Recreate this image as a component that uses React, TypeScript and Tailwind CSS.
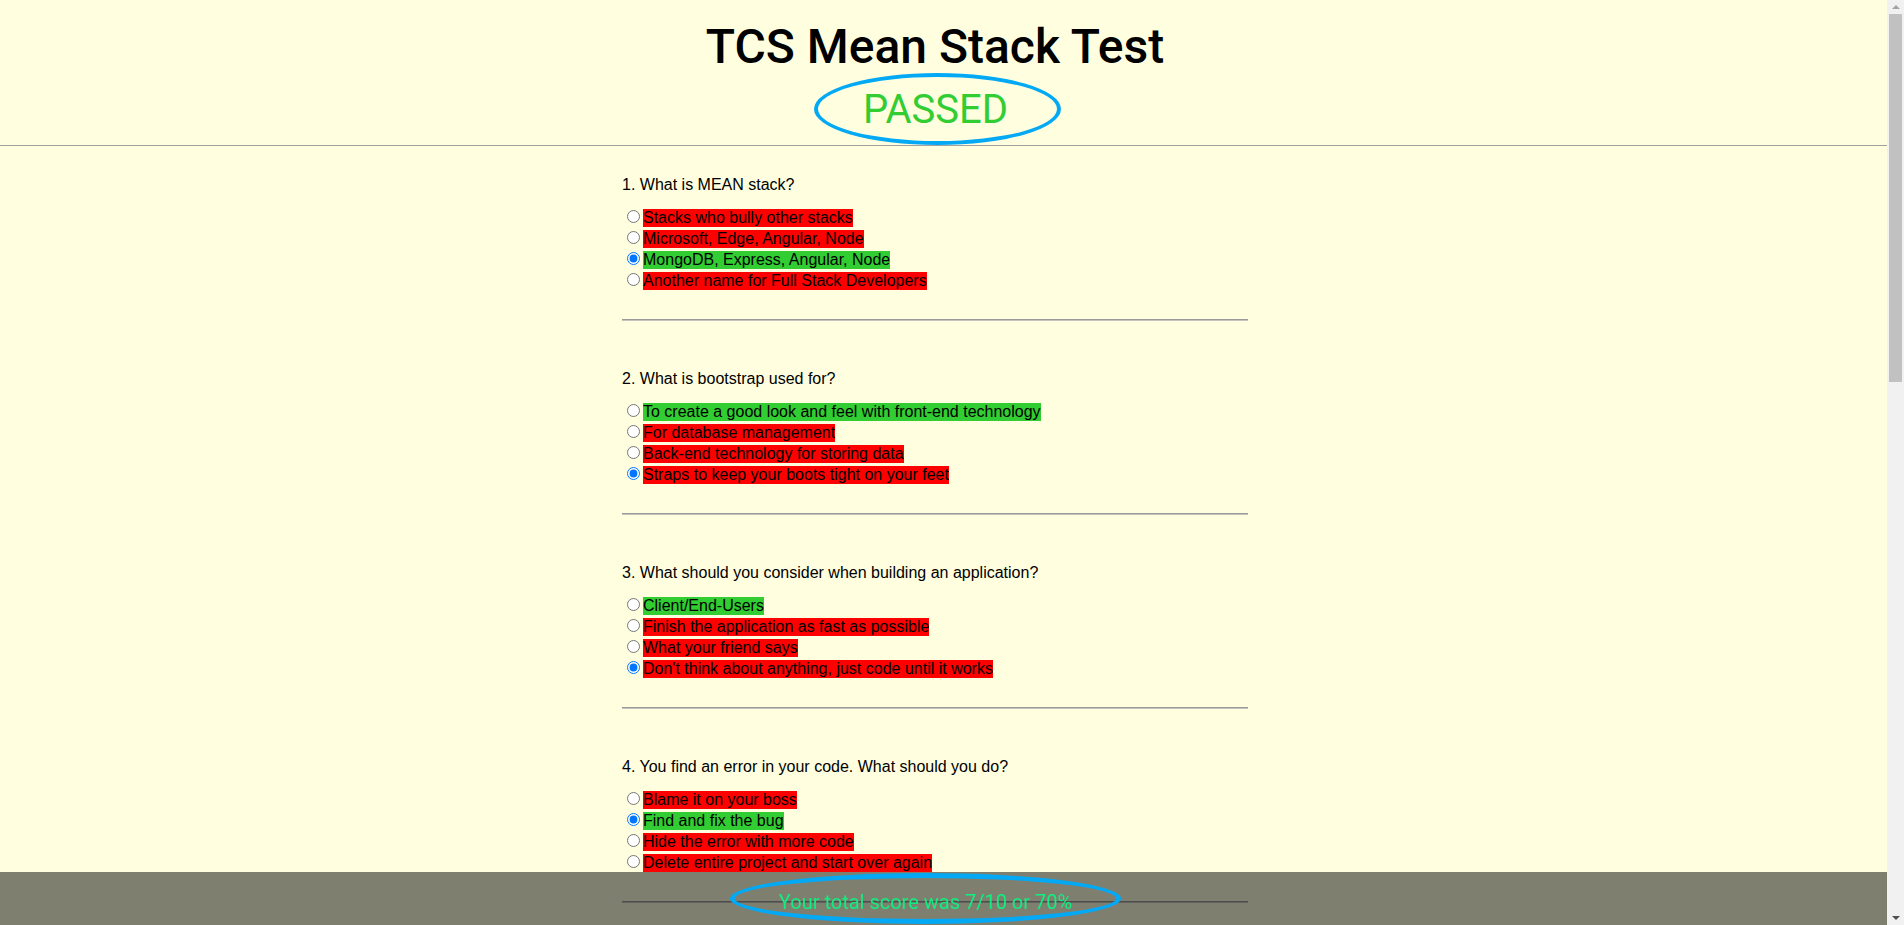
import React from "react";

type Opt = { text: string; correct: boolean; checked: boolean };
type Q = { n: number; q: string; opts: Opt[] };

const questions: Q[] = [
  {
    n: 1,
    q: "What is MEAN stack?",
    opts: [
      { text: "Stacks who bully other stacks", correct: false, checked: false },
      { text: "Microsoft, Edge, Angular, Node", correct: false, checked: false },
      { text: "MongoDB, Express, Angular, Node", correct: true, checked: true },
      { text: "Another name for Full Stack Developers", correct: false, checked: false },
    ],
  },
  {
    n: 2,
    q: "What is bootstrap used for?",
    opts: [
      { text: "To create a good look and feel with front-end technology", correct: true, checked: false },
      { text: "For database management", correct: false, checked: false },
      { text: "Back-end technology for storing data", correct: false, checked: false },
      { text: "Straps to keep your boots tight on your feet", correct: false, checked: true },
    ],
  },
  {
    n: 3,
    q: "What should you consider when building an application?",
    opts: [
      { text: "Client/End-Users", correct: true, checked: false },
      { text: "Finish the application as fast as possible", correct: false, checked: false },
      { text: "What your friend says", correct: false, checked: false },
      { text: "Don't think about anything, just code until it works", correct: false, checked: true },
    ],
  },
  {
    n: 4,
    q: "You find an error in your code. What should you do?",
    opts: [
      { text: "Blame it on your boss", correct: false, checked: false },
      { text: "Find and fix the bug", correct: true, checked: true },
      { text: "Hide the error with more code", correct: false, checked: false },
      { text: "Delete entire project and start over again", correct: false, checked: false },
    ],
  },
];

function Question({ q, first }: { q: Q; first: boolean }) {
  return (
    <div className={first ? "" : "mt-[49px]"}>
      <p className="h-[18px] leading-[18px] text-[16px] text-black">
        {q.n}. {q.q}
      </p>
      <div className="mt-[13px] flex flex-col">
        {q.opts.map((o, i) => (
          <label key={i} className="flex h-[21px] items-center">
            <input
              type="radio"
              name={"q" + q.n}
              checked={o.checked}
              readOnly
              className="ml-[5px] mr-[3px] h-[13px] w-[13px] translate-y-[-1px]"
            />
            <span
              className={
                "h-[18px] leading-[18px] text-[16px] text-black " +
                (o.correct ? "bg-[#32cd32]" : "bg-[#ff0000]")
              }
            >
              {o.text}
            </span>
          </label>
        ))}
      </div>
      <div className="mt-[28px] h-[2px] border-t border-t-[#9a9a9a] border-b border-b-[#c4c4bc]" />
    </div>
  );
}

function FakeScrollbar() {
  return (
    <div className="fixed top-0 right-0 z-20 flex h-full w-[17px] flex-col items-center bg-[#f1f1f1]">
      <div className="flex h-[14px] w-full items-center justify-center">
        <div className="h-0 w-0 border-x-[4px] border-b-[4px] border-x-transparent border-b-[#a3a3a3]" />
      </div>
      <div className="h-[368px] w-[13px] bg-[#c1c1c1]" />
      <div className="flex-1" />
      <div className="flex h-[14px] w-full items-center justify-center">
        <div className="h-0 w-0 border-x-[4px] border-t-[4px] border-x-transparent border-t-[#505050]" />
      </div>
    </div>
  );
}

export default function App() {
  return (
    <div
      className="min-h-screen bg-[#ffffe0] text-black"
      style={{ fontFamily: '"Liberation Sans", Arial, sans-serif' }}
    >
      <header className="w-full">
        <div className="flex w-[1870px] flex-col items-center pt-[19px]">
          <h1
            className="text-[48px] leading-[56px] font-medium text-black"
            style={{ fontFamily: "Roboto, sans-serif" }}
          >
            TCS Mean Stack Test
          </h1>
          <div className="ml-[5px] mt-[-2px] flex h-[72px] w-[247px] items-center justify-center rounded-[50%] border-4 border-[#03a9f4]">
            <span
              className="translate-x-[-2px] text-[40px] leading-[47px] font-normal text-[#32cd32]"
              style={{ fontFamily: "Roboto, sans-serif" }}
            >
              PASSED
            </span>
          </div>
        </div>
        <div className="h-px w-full bg-[#a0a0a0]" />
      </header>

      <main className="ml-[622px] w-[626px] pt-[30px] pb-[140px]">
        {questions.map((q, i) => (
          <Question key={q.n} q={q} first={i === 0} />
        ))}
        <div className="h-[1164px]" />
      </main>

      <footer className="fixed bottom-0 left-0 right-[17px] z-10 flex h-[53px] items-center justify-center bg-black/50 pr-[36px]">
        <div className="flex h-[51px] w-[391px] items-center justify-center rounded-[50%] border-[5px] border-[#03a9f4]">
          <span
            className="translate-y-[3px] text-[20px] leading-[24px] text-[#10ee80]"
            style={{ fontFamily: "Roboto, sans-serif" }}
          >
            Your total score was 7/10 or 70%
          </span>
        </div>
      </footer>

      <FakeScrollbar />
    </div>
  );
}
